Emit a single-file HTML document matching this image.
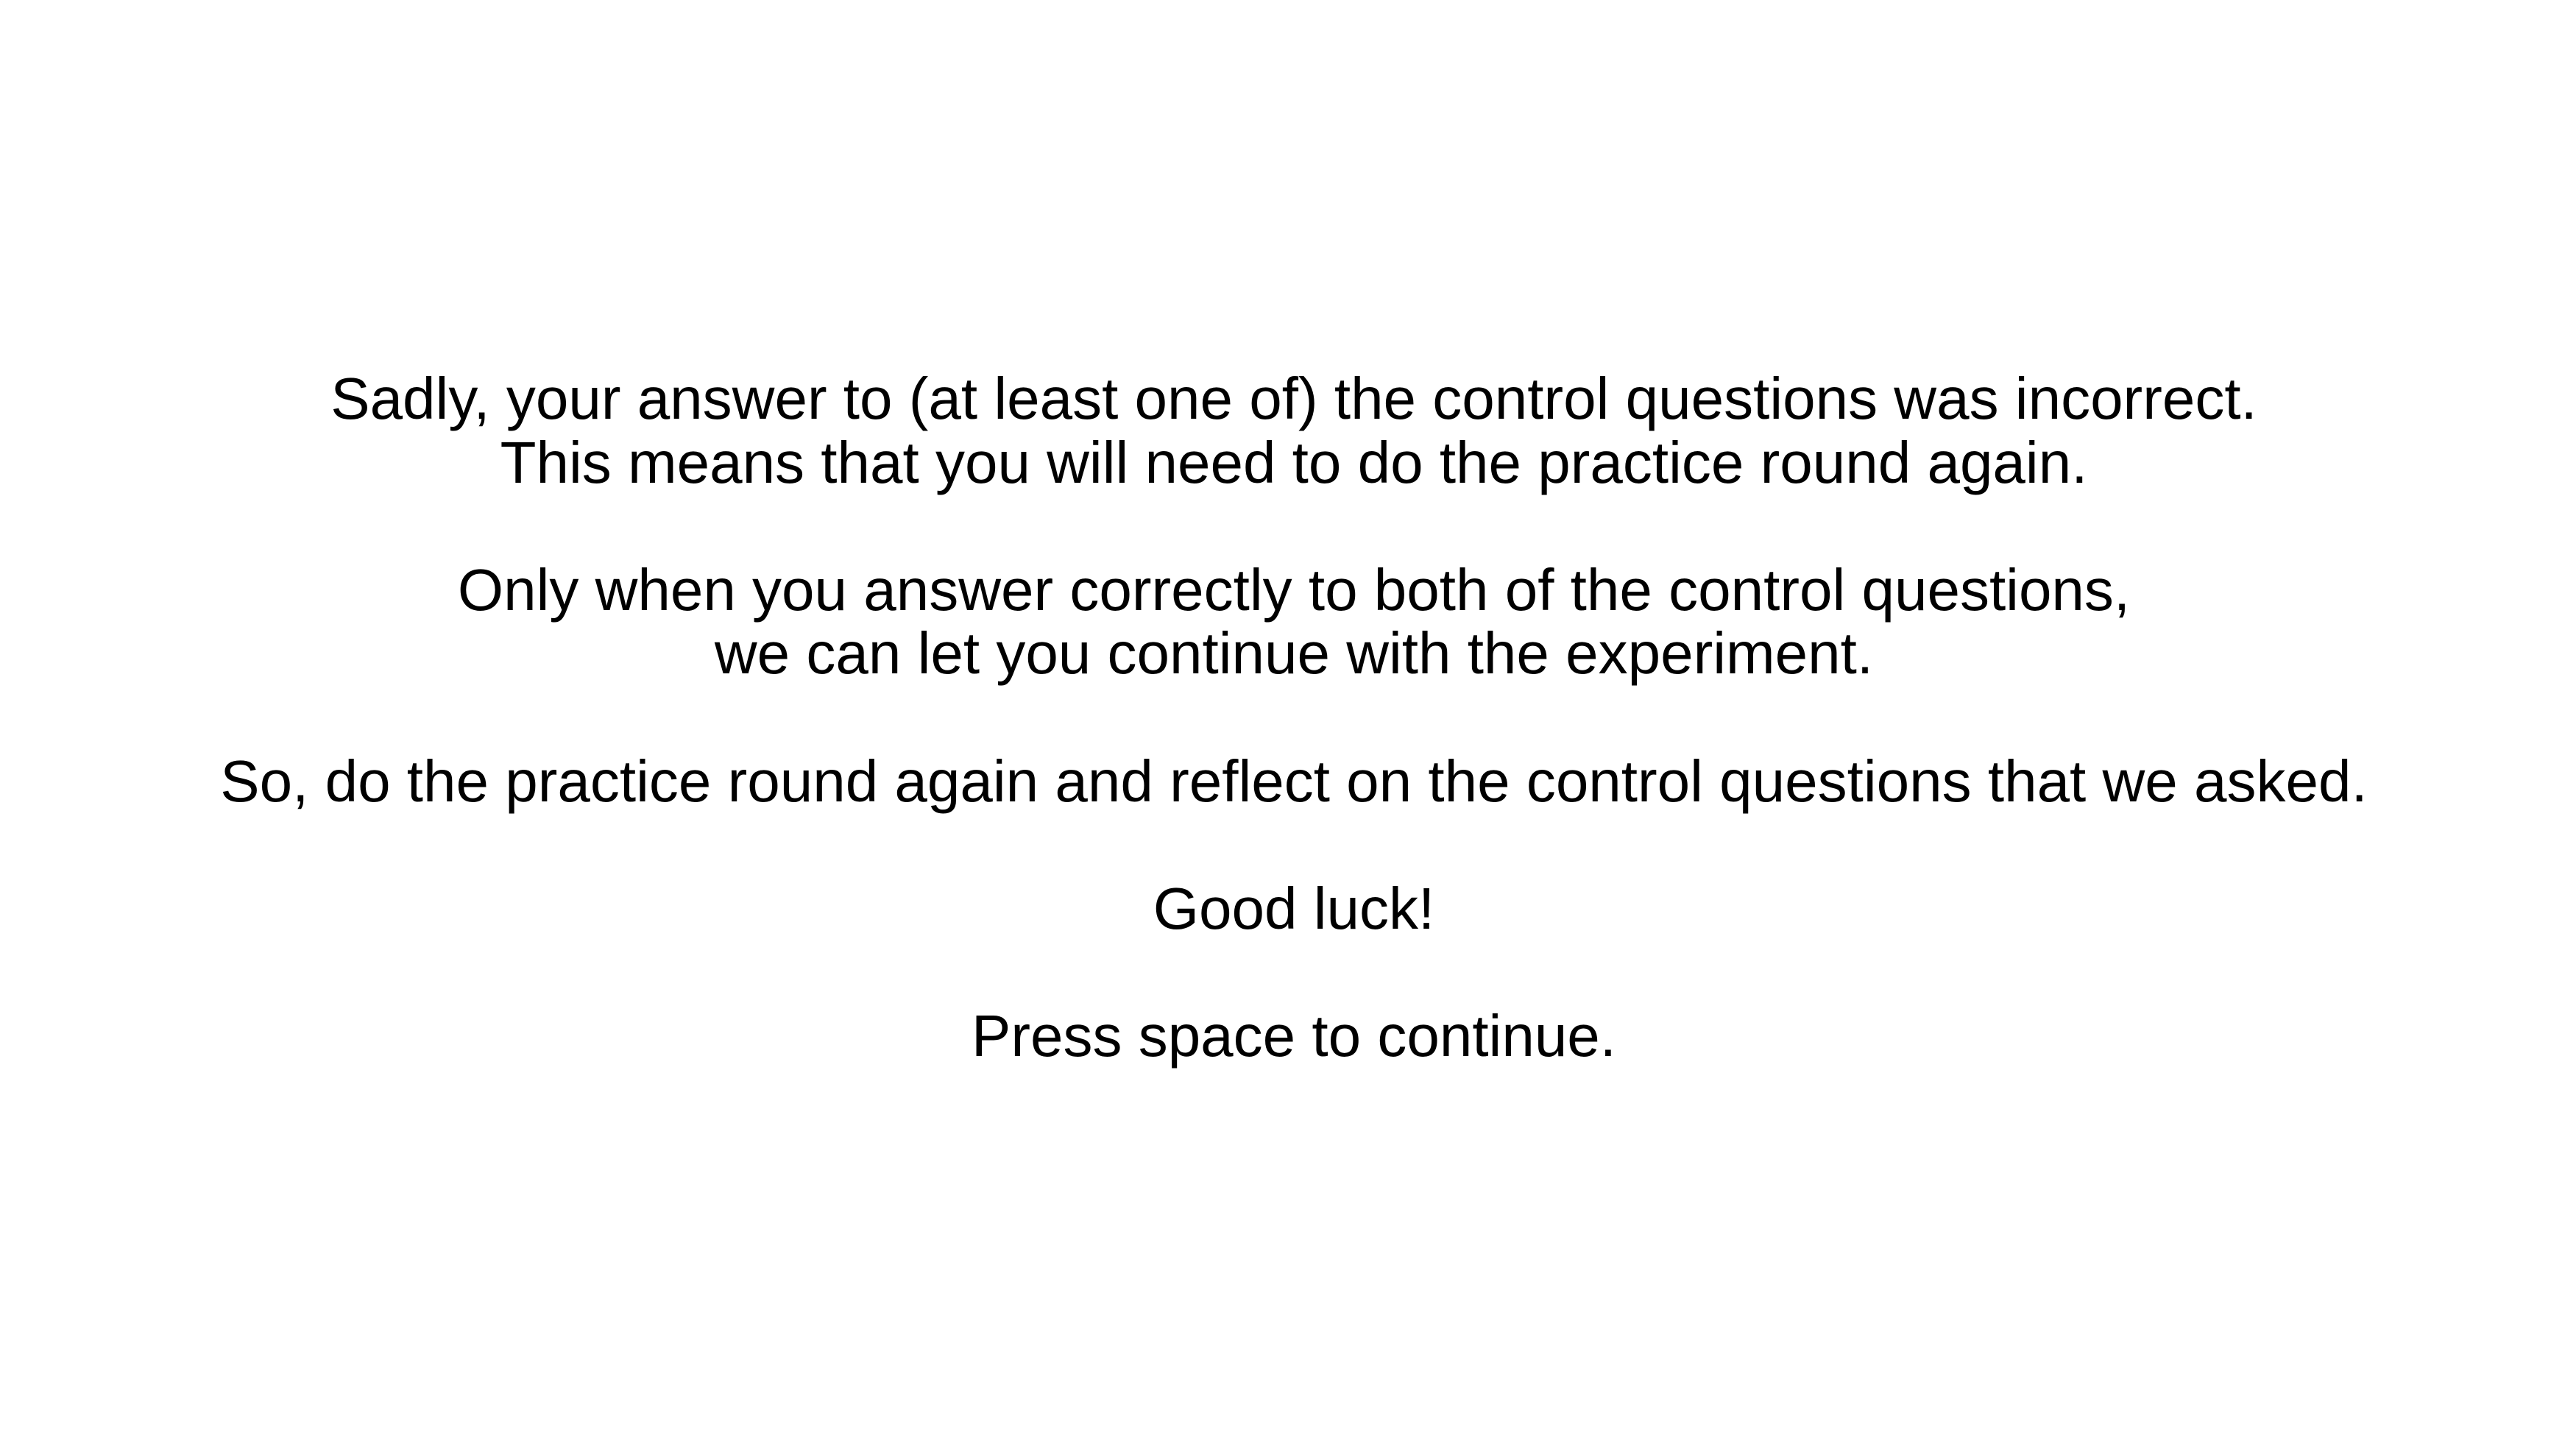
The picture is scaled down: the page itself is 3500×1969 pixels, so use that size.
<!DOCTYPE html>
<html><head><style>
html,body{margin:0;padding:0;background:#fff;width:3500px;height:1969px;overflow:hidden}
.t{position:absolute;top:499px;left:8px;width:3500px;text-align:center;font-family:"Liberation Sans",Helvetica,Arial,sans-serif;font-size:80px;line-height:86.6px;color:#000;white-space:pre}
</style></head><body>
<div class="t">Sadly, your answer to (at least one of) the control questions was incorrect.
This means that you will need to do the practice round again.

Only when you answer correctly to both of the control questions,
we can let you continue with the experiment.

So, do the practice round again and reflect on the control questions that we asked.

Good luck!

Press space to continue.</div>
</body></html>
